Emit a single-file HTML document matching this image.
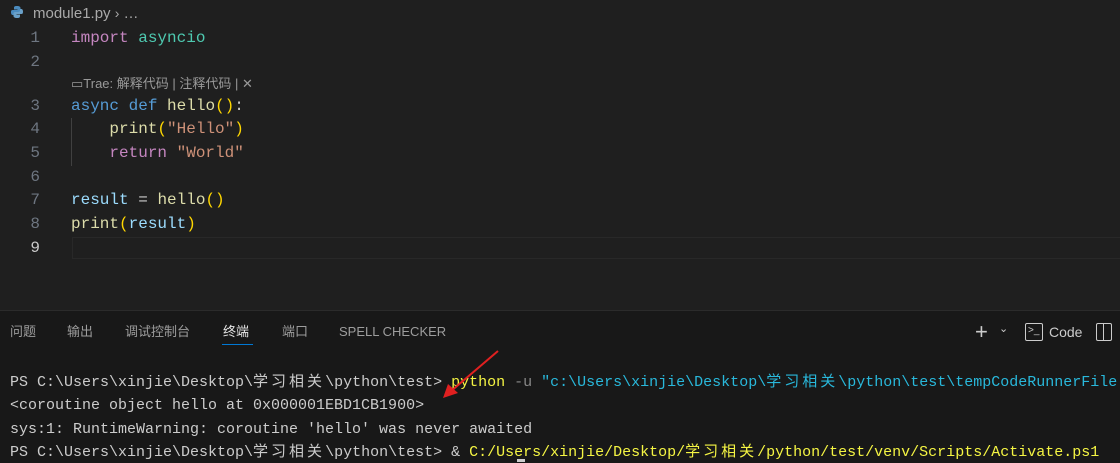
<!DOCTYPE html>
<html><head><meta charset="utf-8"><style>
body{margin:0;width:1120px;height:462px;background:#1f1f1f;overflow:hidden;position:relative;font-family:"Liberation Sans","Noto Sans CJK SC",sans-serif}
.a{position:absolute;white-space:pre}
.m{font-family:"Liberation Mono","Noto Sans CJK SC",monospace;font-size:16px;line-height:20px}
.ln{color:#6e7681;font-family:"Liberation Mono",monospace;font-size:16px;line-height:20px;width:40px;text-align:right}
.t{font-family:"Liberation Mono","Noto Sans CJK SC",monospace;font-size:15px;line-height:20px;height:20px;color:#cccccc}
.c{letter-spacing:3px}
.k{color:#c586c0}.b{color:#569cd6}.f{color:#dcdcaa}.s{color:#ce9178}.v{color:#9cdcfe}.g{color:#4ec9b0}.y{color:#ffd700}
.tab{font-size:13px;line-height:16px;color:#9d9d9d;top:324px}
</style></head><body>
<svg class="a" style="left:10px;top:5px;display:block" width="14" height="14" viewBox="0 0 14 14"><path d="M7 1C4 1 4 2 4 3v1.5h3.5V5H2.5C1 5 1 6.5 1 7.5S1.5 10 2.5 10H4V8.5C4 7.5 5 7 6 7h3c1 0 1.5-.5 1.5-1.5V3C10.5 2 9.5 1 7 1z" fill="#4b8bbe"/><path d="M7 13c3 0 3-1 3-2V9.5H6.5V9h5c1.5 0 1.5-1.5 1.5-2.5S12.5 4 11.5 4H10v1.5c0 1-1 1.5-2 1.5H5c-1 0-1.5.5-1.5 1.5V11c0 1 1 2 3.5 2z" fill="#6aa0c8"/></svg>
<div class="a" style="left:33px;top:5px;font-size:15px;line-height:17px;color:#a9a9a9">module1.py <span style="font-size:14px">›</span> …</div>
<div class="a" style="left:72px;top:237px;width:1048px;height:20px;border:1px solid #282828;border-right:none"></div>
<div class="a" style="left:71px;top:118px;width:1px;height:48px;background:#404040"></div>
<div class="a ln" style="left:0;top:28px">1</div>
<div class="a ln" style="left:0;top:52px">2</div>
<div class="a ln" style="left:0;top:96px">3</div>
<div class="a ln" style="left:0;top:119px">4</div>
<div class="a ln" style="left:0;top:143px">5</div>
<div class="a ln" style="left:0;top:167px">6</div>
<div class="a ln" style="left:0;top:190px">7</div>
<div class="a ln" style="left:0;top:214px">8</div>
<div class="a ln" style="left:0;top:238px;color:#cccccc">9</div>
<div class="a m" style="left:71px;top:28px"><span class="k">import</span> <span class="g">asyncio</span></div>
<div class="a" style="left:71px;top:76px;font-size:13px;line-height:16px;color:#999">▭Trae: 解释代码 | 注释代码 | ✕</div>
<div class="a m" style="left:71px;top:96px"><span class="b">async</span> <span class="b">def</span> <span class="f">hello</span><span class="y">()</span><span style="color:#ccc">:</span></div>
<div class="a m" style="left:71px;top:119px">    <span class="f">print</span><span class="y">(</span><span class="s">"Hello"</span><span class="y">)</span></div>
<div class="a m" style="left:71px;top:143px">    <span class="k">return</span> <span class="s">"World"</span></div>
<div class="a m" style="left:71px;top:190px"><span class="v">result</span> <span style="color:#ccc">=</span> <span class="f">hello</span><span class="y">()</span></div>
<div class="a m" style="left:71px;top:214px"><span class="f">print</span><span class="y">(</span><span class="v">result</span><span class="y">)</span></div>
<div class="a" style="left:0;top:310px;width:1120px;height:152px;background:#181818;border-top:1px solid #2b2b2b"></div>
<div class="a tab" style="left:10px">问题</div>
<div class="a tab" style="left:67px">输出</div>
<div class="a tab" style="left:125px">调试控制台</div>
<div class="a tab" style="left:223px;color:#e7e7e7">终端</div>
<div class="a" style="left:222px;top:344px;width:31px;height:1px;background:#0078d4"></div>
<div class="a tab" style="left:282px">端口</div>
<div class="a tab" style="left:339px">SPELL CHECKER</div>
<div class="a" style="left:975px;top:320px;font-size:22px;line-height:24px;color:#ccc">+</div>
<div class="a" style="left:999px;top:322px;font-size:11px;color:#ccc">⌄</div>
<div class="a" style="left:1025px;top:323px;width:16px;height:16px;border:1px solid #ccc;border-radius:2px;font-size:10px;color:#ccc;line-height:14px;text-indent:2px">&gt;_</div>
<div class="a" style="left:1049px;top:324px;font-size:14px;line-height:16px;color:#ccc">Code</div>
<div class="a" style="left:1096px;top:323px;width:14px;height:16px;border:1px solid #ccc;border-radius:2px"></div>
<div class="a" style="left:1103px;top:323px;width:1px;height:17px;background:#ccc"></div>
<div class="a t" style="left:10px;top:373px">PS C:\Users\xinjie\Desktop\<span class="c">学习相关</span>\python\test&gt; <span style="color:#f5f543">python</span> <span style="color:#888">-u</span> <span style="color:#29b8db">"c:\Users\xinjie\Desktop\<span class="c">学习相关</span>\python\test\tempCodeRunnerFile</span></div>
<div class="a t" style="left:10px;top:396px">&lt;coroutine object hello at 0x000001EBD1CB1900&gt;</div>
<div class="a t" style="left:10px;top:420px">sys:1: RuntimeWarning: coroutine 'hello' was never awaited</div>
<div class="a t" style="left:10px;top:443px">PS C:\Users\xinjie\Desktop\<span class="c">学习相关</span>\python\test&gt; &amp; <span style="color:#f5f543">C:/Users/xinjie/Desktop/<span class="c">学习相关</span>/python/test/venv/Scripts/Activate.ps1</span></div>
<div class="a" style="left:517px;top:459px;width:8px;height:3px;background:#ccc"></div>
<svg class="a" style="left:440px;top:348px;display:block" width="62" height="52"><line x1="58" y1="3" x2="10" y2="44" stroke="#e02020" stroke-width="2"/><polygon points="3,50 8,36 18,45" fill="#e02020"/></svg>
</body></html>
